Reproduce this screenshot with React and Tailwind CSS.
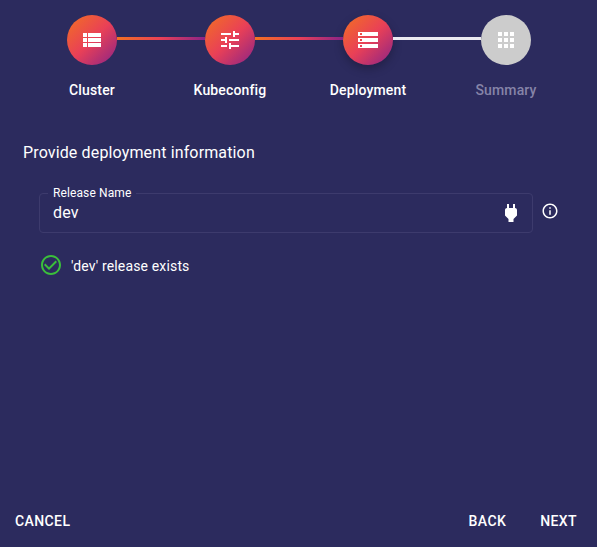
const PATHS = {
  list: 'M3 14h4v-4H3v4zm0 5h4v-4H3v4zM3 9h4V5H3v4zm5 5h13v-4H8v4zm0 5h13v-4H8v4zM8 5v4h13V5H8z',
  tune: 'M3 17v2h6v-2H3zM3 5v2h10V5H3zm10 16v-2h8v-2h-8v-2h-2v6h2zM7 9v2H3v2h4v2h2V9H7zm14 4v-2H11v2h10zm-6-4h2V7h4V5h-4V3h-2v6z',
  storage: 'M2 20h20v-4H2v4zm2-3h2v2H4v-2zM2 4v4h20V4H2zm4 3H4V5h2v2zm-4 7h20v-4H2v4zm2-3h2v2H4v-2z',
  apps: 'M4 8h4V4H4v4zm6 12h4v-4h-4v4zm-6 0h4v-4H4v4zm0-6h4v-4H4v4zm6 0h4v-4h-4v4zm6-10v4h4V4h-4zm-6 4h4V4h-4v4zm6 6h4v-4h-4v4zm0 6h4v-4h-4v4z',
  power: 'M16.01 7L16 3h-2v4h-4V3H8v4h-.01C7 6.99 6 7.99 6 8.99v5.49L9.5 18v3h5v-3l3.5-3.51v-5.5c0-1-1-2-1.99-1.99z',
  info: 'M11 7h2v2h-2zm0 4h2v6h-2zm1-9C6.48 2 2 6.48 2 12s4.48 10 10 10 10-4.48 10-10S17.52 2 12 2zm0 18c-4.41 0-8-3.59-8-8s3.59-8 8-8 8 3.59 8 8-3.59 8-8 8z',
  check: 'M16.59 7.58L10 14.17l-3.59-3.58L5 12l5 5 8-8zM12 2C6.48 2 2 6.48 2 12s4.48 10 10 10 10-4.48 10-10S17.52 2 12 2zm0 18c-4.42 0-8-3.58-8-8s3.58-8 8-8 8 3.58 8 8-3.58 8-8 8z',
};

function Icon({ name, className = 'size-6' }) {
  return (
    <svg viewBox="0 0 24 24" fill="currentColor" className={`shrink-0 ${className}`}>
      <path d={PATHS[name]} />
    </svg>
  );
}

const DONE = 'bg-[linear-gradient(136deg,#f27121_0%,#e94057_50%,#8a2387_100%)]';
const LINE_DONE = 'bg-[linear-gradient(95deg,#f27121_0%,#e94057_50%,#8a2387_100%)]';

const STEPS = [
  { label: 'Cluster', icon: 'list', circle: DONE, text: 'text-white' },
  { label: 'Kubeconfig', icon: 'tune', circle: DONE, text: 'text-white', line: LINE_DONE },
  {
    label: 'Deployment',
    icon: 'storage',
    circle: `${DONE} shadow-[0_4px_10px_0_rgba(0,0,0,0.25)]`,
    text: 'text-white',
    line: LINE_DONE,
  },
  { label: 'Summary', icon: 'apps', circle: 'bg-[#cccccc]', text: 'text-[#8684a8]', line: 'bg-[#eaeaf0]' },
];

function Step({ step }) {
  return (
    <li className="relative flex w-[138px] flex-col items-center">
      {step.line && <div className={`absolute top-[22px] right-[94px] h-[3px] w-[88px] ${step.line}`} />}
      <div className={`flex size-[50px] items-center justify-center rounded-full text-white ${step.circle}`}>
        <Icon name={step.icon} />
      </div>
      <span className={`mt-[15px] text-sm leading-5 font-medium tracking-[0.15px] ${step.text}`}>{step.label}</span>
    </li>
  );
}

export default function App() {
  return (
    <div className="flex h-[547px] w-[597px] flex-col bg-[#2c2b5e] font-[Roboto,sans-serif] text-white">
      <ol className="flex pt-[15px] pl-[23px]">
        {STEPS.map((step) => (
          <Step key={step.label} step={step} />
        ))}
      </ol>
      <main className="flex-1 pt-[41px] pl-[23px]">
        <h1 className="text-base leading-6 tracking-[0.14px]">Provide deployment information</h1>
        <div className="mt-[21px] ml-4 flex items-start">
          <fieldset className="h-[47px] w-[494px] rounded border border-[#3d3b6d] pl-2">
            <legend className="h-[14px] pr-[5px] pl-[5px] text-xs leading-[14px] tracking-[0.11px]">Release Name</legend>
            <div className="flex items-center justify-between pt-px pr-[9px] pl-[5px]">
              <span className="text-base leading-6 tracking-[0.14px]">dev</span>
              <Icon name="power" />
            </div>
          </fieldset>
          <Icon name="info" className="mt-4 ml-2 size-[18px]" />
        </div>
        <div className="mt-5 ml-4 flex items-center gap-2">
          <Icon name="check" className="size-6 text-[#3bbf3b]" />
          <span className="pt-0.5 text-sm leading-5 tracking-[0.15px]">'dev' release exists</span>
        </div>
      </main>
      <footer className="flex h-[52px] items-center pr-5 pl-[15px] text-sm font-medium tracking-[0.4px]">
        <button>CANCEL</button>
        <button className="mr-[34px] ml-auto">BACK</button>
        <button>NEXT</button>
      </footer>
    </div>
  );
}
